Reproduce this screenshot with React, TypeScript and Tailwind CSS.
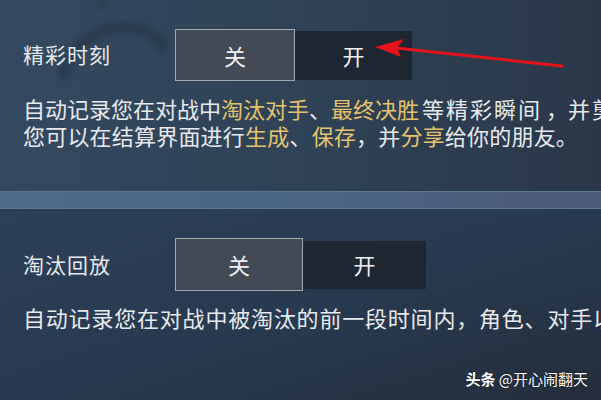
import React from 'react';

const FONT = '"Noto Sans CJK SC", "Noto Sans", sans-serif';

type Seg = { t: string; hi?: boolean; cls?: string };

const Toggle: React.FC<{ offW: number; offH: number; onW: number; onH: number }> = ({ offW, offH, onW, onH }) => (
  <div className="flex items-center">
    <div
      className="flex items-center justify-center border-[1.5px] border-[#a3a9b1] bg-[#434a55] text-[22px] text-[#eef0f3]"
      style={{ width: offW, height: offH }}
    >
      关
    </div>
    <div
      className="flex items-center justify-center bg-[#1d2631] text-[22px] text-[#eef0f3]"
      style={{ width: onW, height: onH }}
    >
      开
    </div>
  </div>
);

const Line: React.FC<{ segs: Seg[]; className?: string }> = ({ segs, className = '' }) => (
  <div className={`whitespace-nowrap ${className}`}>
    {segs.map((s, i) => (
      <span key={i} className={`${s.hi ? 'text-[#e6c36e]' : ''} ${s.cls ?? ''}`}>
        {s.t}
      </span>
    ))}
  </div>
);

export default function App() {
  return (
    <div
      className="relative w-[601px] h-[400px] overflow-hidden flex flex-col text-[#e7eaee]"
      style={{ fontFamily: FONT }}
    >
      {/* Section 1 */}
      <section className="relative h-[191px] shrink-0 bg-gradient-to-r from-[#34495f] via-[#2f4256] to-[#2b3749] pl-[23px] pt-[29px]">
        <svg className="absolute left-0 top-0 blur-[2px]" width="220" height="120" viewBox="0 0 220 120">
          <path
            d="M64 74 C 72 44, 100 26, 125 27 C 145 28, 157 36, 162 46"
            fill="none"
            stroke="rgba(22,34,50,0.28)"
            strokeWidth="11"
            strokeLinecap="round"
          />
          <circle cx="102" cy="5" r="5" fill="rgba(22,34,50,0.25)" />
        </svg>
        <div className="relative flex items-center">
          <div className="w-[152px] text-[21px] tracking-[1px]">精彩时刻</div>
          <Toggle offW={120} offH={52} onW={117} onH={49} />
        </div>
        <div className="relative mt-[14px] text-[22px] leading-[27px]">
          <Line
            segs={[
              { t: '自动记录您在对战中' },
              { t: '淘汰对手', hi: true },
              { t: '、' },
              { t: '最终决胜', hi: true },
              { t: '等精彩瞬间', cls: 'tracking-[2px] ml-[3px]' },
              { t: '，', cls: 'ml-[4px]' },
              { t: '并剪辑', cls: 'tracking-[2px]' },
            ]}
          />
          <Line
            className="tracking-[0.2px]"
            segs={[
              { t: '您可以在结算界面进行' },
              { t: '生成', hi: true },
              { t: '、' },
              { t: '保存', hi: true },
              { t: '，并' },
              { t: '分享', hi: true },
              { t: '给你的朋友。' },
            ]}
          />
        </div>
      </section>

      {/* Divider band */}
      <div className="h-[18px] shrink-0 border-y border-[#5b7893] bg-gradient-to-r from-[#4b6c8a] via-[#4a6684] to-[#4c5977]" />

      {/* Section 2 */}
      <section className="relative flex-1 bg-gradient-to-br from-[#2c4058] via-[#283a50] to-[#242d3c] pl-[23px] pt-[29px]">
        <div className="flex items-center">
          <div className="w-[152px] text-[21px] tracking-[1px]">淘汰回放</div>
          <Toggle offW={128} offH={53} onW={123} onH={48} />
        </div>
        <div className="mt-[13px] text-[22px] leading-[27px]">
          <Line className="tracking-[0.8px]" segs={[{ t: '自动记录您在对战中被淘汰的前一段时间内，角色、对手以及' }]} />
        </div>
        <div className="absolute right-[13px] bottom-[10px] text-[15px] text-white [text-shadow:0_0_2px_rgba(0,0,0,0.6)]">
          <span className="font-bold">头条</span> @开心闹翻天
        </div>
      </section>

      {/* Red arrow annotation */}
      <svg className="absolute left-0 top-0 pointer-events-none" width="601" height="400" viewBox="0 0 601 400">
        <line x1="396" y1="48" x2="562" y2="66" stroke="#e3141b" strokeWidth="3" strokeLinecap="round" />
        <polygon points="375,47 404,39 397,48 401,57" fill="#e3141b" />
      </svg>
    </div>
  );
}
